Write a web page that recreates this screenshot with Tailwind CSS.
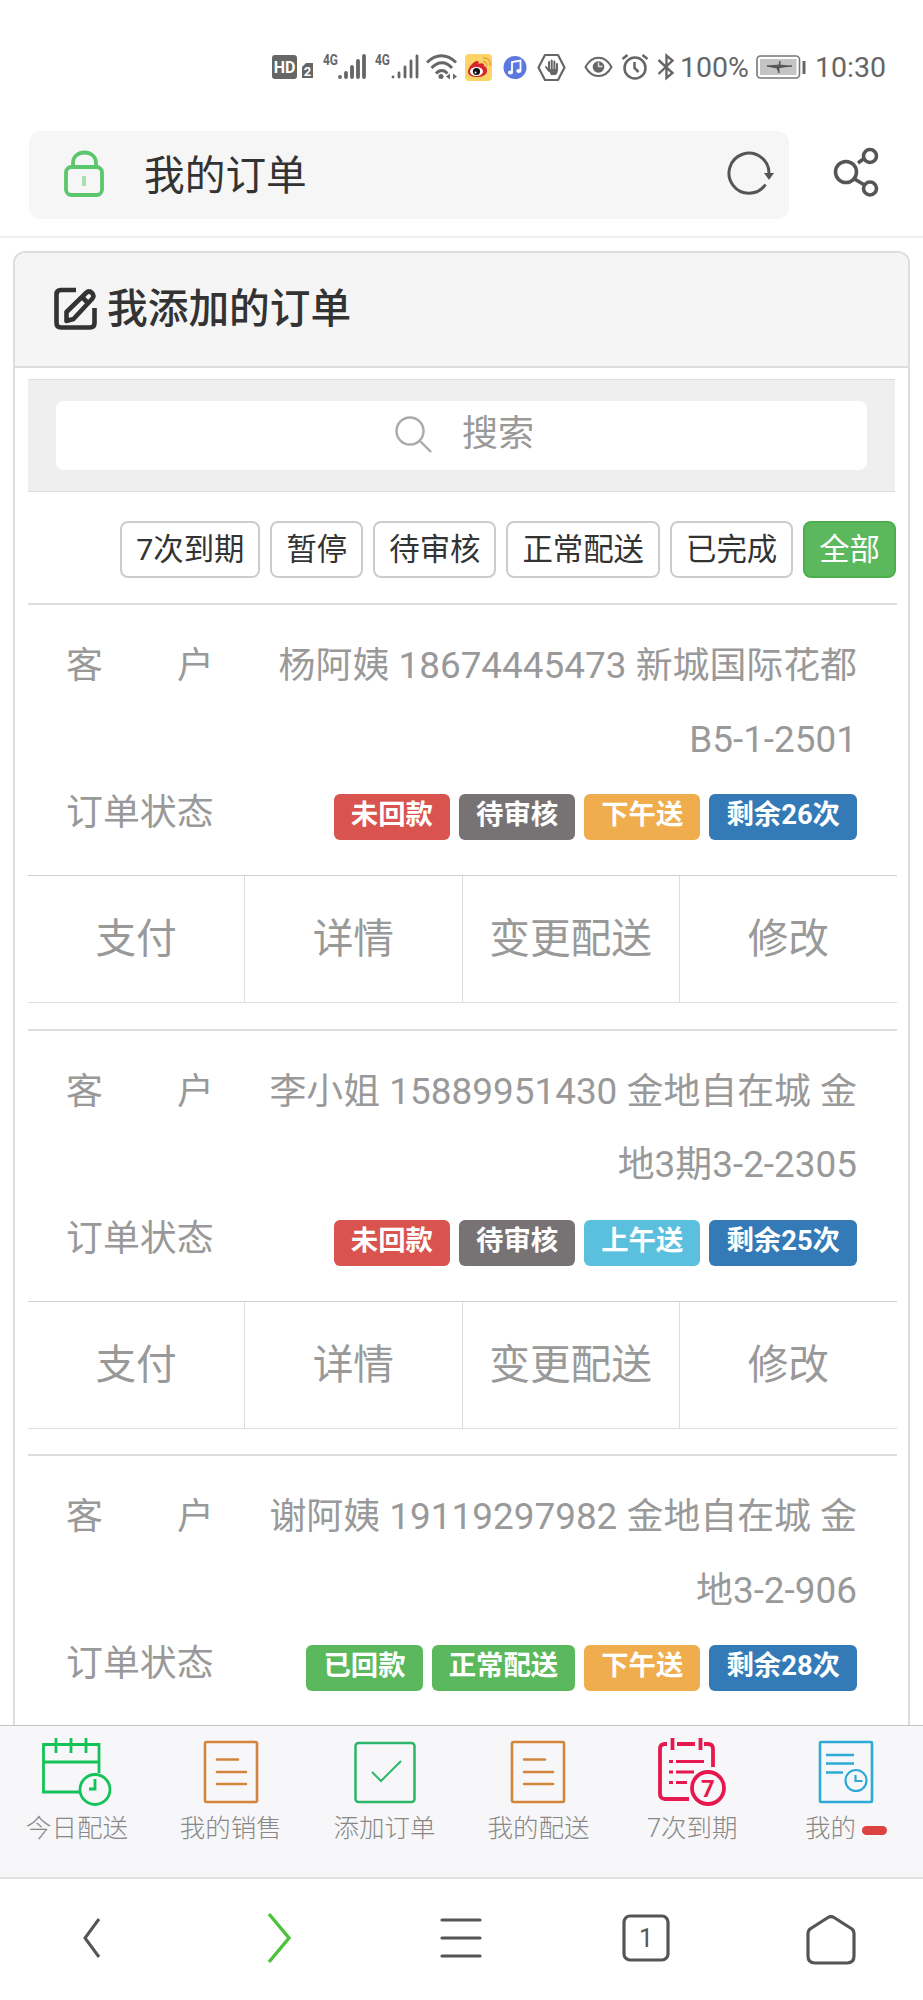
<!DOCTYPE html>
<html lang="zh-CN">
<head>
    <meta charset="UTF-8">
    <meta name="viewport" content="width=device-width, initial-scale=1.0">
    <title>我的订单</title>
    <!-- Tailwind CSS CDN -->
    <script src="https://cdn.jsdelivr.net/npm/@tailwindcss/browser@4"></script>
</head>
<body class="bg-white font-['Roboto','Noto_Sans_CJK_SC',sans-serif] text-[#333]">
<div class="w-[923px] h-[2000px] flex flex-col overflow-hidden">

    <!-- Status bar -->
    <div class="h-[131px] shrink-0 flex items-start pt-[50px] pl-[272px] text-[#666]">
        <svg class="w-[41px] h-[34px] shrink-0" viewBox="0 0 41 34" fill="#666">
            <rect x="0" y="5" width="25" height="24" rx="3"/>
            <text x="12.5" y="23" font-size="16" font-weight="700" fill="#fff" text-anchor="middle">HD</text>
            <path d="M34 13h7v15H30V17z"/>
            <text x="35.5" y="26" font-size="13" font-weight="700" fill="#fff" text-anchor="middle">2</text>
        </svg>
        <svg class="w-[44px] h-[34px] shrink-0 ml-[10px]" viewBox="0 0 44 34" fill="none" stroke="#666" stroke-width="3.8" stroke-linecap="round">
            <text x="0" y="15" font-size="15" font-weight="700" fill="#666" stroke="none" textLength="15" lengthAdjust="spacingAndGlyphs">4G</text>
            <path d="M17 27v0M23 27v-4M29 27v-10M35 27V11M41 27V6"/>
        </svg>
        <svg class="w-[44px] h-[34px] shrink-0 ml-[8px]" viewBox="0 0 44 34" fill="none" stroke="#666" stroke-width="2.8" stroke-linecap="round">
            <text x="0" y="15" font-size="15" font-weight="700" fill="#666" stroke="none" textLength="15" lengthAdjust="spacingAndGlyphs">4G</text>
            <path d="M18 27v0M24 27v-4M30 27v-10M36 27V11M42 27V6"/>
        </svg>
        <svg class="w-[32px] h-[34px] shrink-0 ml-[7px]" viewBox="0 0 32 34" fill="none" stroke="#666" stroke-width="2.8">
            <path d="M1 12.5C10 3.500 21 3.500 30 12.500M5.500 18C12 11 20 11 26 18M10 23.500c3.500-4 8-4 11.500 0"/>
            <circle cx="15" cy="26.500" r="2.500" fill="#666" stroke="none"/>
            <path d="M24 23.500v6l-4-3zM27 23.500v6l4-3z" fill="#666" stroke="none"/>
        </svg>
        <svg class="w-[27px] h-[34px] shrink-0 ml-[7px]" viewBox="0 0 27 34">
            <rect x="0" y="4" width="27" height="27" rx="4" fill="#fcd467"/>
            <path d="M3 22c0-5 6-11 9-11 2 0 2 2 1.500 3 3-1.500 6-1 5.500 2 3 1 3 3 3 5 0 4-5 6-10 6s-9-2-9-5z" fill="#d8262c"/>
            <ellipse cx="11.500" cy="21.500" rx="6.500" ry="4.500" fill="#fff"/>
            <circle cx="11.500" cy="21.500" r="3.600" fill="#111"/>
            <circle cx="10.500" cy="22.500" r="1" fill="#fff"/>
            <path d="M18 12c3-.5 4 1.500 3.500 4M18 8c6-.5 8 4 7 8" fill="none" stroke="#eda13c" stroke-width="1.600"/>
        </svg>
        <svg class="w-[24px] h-[34px] shrink-0 ml-[11px]" viewBox="0 0 24 34">
            <circle cx="12" cy="17.500" r="11.500" fill="#5b79de"/>
            <path d="M9 22.500V12l8.500-1.500V21" fill="none" stroke="#fff" stroke-width="1.800"/>
            <ellipse cx="7.500" cy="22.500" rx="2.500" ry="2" fill="#fff"/>
            <ellipse cx="15.800" cy="21" rx="2.500" ry="2" fill="#fff"/>
        </svg>
        <svg class="w-[29px] h-[34px] shrink-0 ml-[10px]" viewBox="0 0 29 34" fill="none" stroke="#666" stroke-width="2.200" stroke-linejoin="round">
            <path d="M8 5h13l6.500 12.500L21 30H8L1.500 17.500z"/>
            <path d="M9 17l3 4M12 12v8M14.700 10.500V20M17.400 11.500V20M20 14v6" stroke-width="2" stroke-linecap="round"/>
            <path d="M11 19h10c0 4-1.500 6-3 6h-4z" fill="#666" stroke="none"/>
        </svg>
        <svg class="w-[29px] h-[34px] shrink-0 ml-[18px]" viewBox="0 0 29 34" fill="none" stroke="#666" stroke-width="2">
            <path d="M1.500 17C8 4.500 21 4.500 27.500 17 21 29 8 29 1.500 17z"/>
            <circle cx="14.500" cy="17" r="5.800" fill="#666" stroke="none"/>
            <path d="M14.500 12.500v4h4" stroke="#ddd" stroke-width="1.500"/>
        </svg>
        <svg class="w-[28px] h-[34px] shrink-0 ml-[8px]" viewBox="0 0 28 34" fill="none" stroke="#666" stroke-width="2.500">
            <circle cx="14" cy="18" r="10.500"/>
            <path d="M13.500 12v6l4 4M1.500 9l5-4M21.500 5l5 4"/>
        </svg>
        <svg class="w-[19px] h-[34px] shrink-0 ml-[8px]" viewBox="0 0 19 34" fill="none" stroke="#666" stroke-width="2.400">
            <path d="M1.500 10l14 13-6 5V5.500l6 5-14 13.500"/>
        </svg>
        <span class="w-[76px] ml-[4px] text-[28.500px] leading-[36px]">100%</span>
        <svg class="w-[52px] h-[34px] shrink-0" viewBox="0 0 52 34">
            <rect x="1" y="6" width="42.500" height="22" rx="3.500" fill="#fff" stroke="#777" stroke-width="1.600"/>
            <rect x="4" y="9" width="36.500" height="16" fill="#c4c4c4"/>
            <path d="M11 16l13-1V11l-1 4 10 1h3l-13 1.500V23l-2-5z" fill="#555" stroke="#555"/>
            <path d="M48 11v13" stroke="#666" stroke-width="3"/>
        </svg>
        <span class="ml-[7px] text-[28.500px] leading-[36px]">10:30</span>
    </div>

    <!-- Browser address bar -->
    <div class="h-[107px] shrink-0 flex items-start border-b-2 border-[#eee] pl-[29px]">
        <div class="w-[760px] h-[88px] rounded-xl bg-[#f6f6f6] flex items-center">
            <svg class="w-[42px] h-[50px] ml-[34px] -mt-[5px]" viewBox="0 0 42 50" fill="none" stroke="#5cc66c" stroke-width="3.800">
                <rect x="3" y="19" width="36" height="28" rx="5.500"/>
                <path d="M10 19v-4c0-14 23-14 23 0v4"/>
                <path d="M21 28v10" stroke="#a5dfae"/>
            </svg>
            <span class="ml-[39px] mt-[2px] text-[40.700px] leading-none">我的订单</span>
            <svg class="w-[48px] h-[44px] ml-auto mr-[14px] -mt-[4px]" viewBox="0 0 48 44" fill="none" stroke="#555" stroke-width="3">
                <path d="M42 22A20 20 0 1 0 38.500 33.500"/>
                <path d="M37 22h10l-5 7z" fill="#555" stroke="none"/>
            </svg>
        </div>
        <svg class="w-[46px] h-[50px] ml-[44px] mt-[16px]" viewBox="0 0 46 50" fill="none" stroke="#555" stroke-width="3.600">
            <circle cx="13" cy="25" r="10.500"/>
            <circle cx="37" cy="9" r="6.500"/>
            <circle cx="37" cy="41.500" r="6.500"/>
            <path d="M25 16l6-4.500M21.500 32l10 6"/>
        </svg>
    </div>

    <!-- Orders panel -->
    <main class="flex-1 min-h-0 overflow-hidden pt-[13px] pl-[13px] pr-[13px]">
        <div class="h-[1600px] border-2 border-[#ddd] rounded-t-xl">
            <div class="h-[115px] flex items-center pl-[39px] bg-[#f5f5f5] border-b-2 border-[#ddd] rounded-t-[10px]">
                <svg class="w-[44px] h-[44px] -mt-[2px]" viewBox="0 0 44 44" fill="none" stroke="#333" stroke-width="4.600" stroke-linejoin="round">
                    <path d="M22 3H7Q2.500 3 2.500 7.500V36q0 4.500 4.500 4.500h29q4.500 0 4.500-4.500V21"/>
                    <path d="M12.500 25L32 6q3-3 6 0t0 6L19.500 32l-7 2z"/>
                    <path d="M28 10l6 6"/>
                </svg>
                <span class="ml-[9px] text-[40.700px] leading-none font-medium">我添加的订单</span>
            </div>

            <div class="mt-[11px] mx-[13px] h-[113px] bg-[#efefef] border-y border-[#ddd] px-[28px] pt-[21px]">
                <div class="h-[69px] bg-white rounded-lg flex items-center justify-center pl-[6px] text-[#999]">
                    <svg class="w-[37px] h-[37px] -mt-[3px]" viewBox="0 0 37 37" fill="none" stroke="#aaa" stroke-width="2.400">
                        <circle cx="15" cy="15" r="13.500"/>
                        <path d="M24.500 24.500L36 36"/>
                    </svg>
                    <span class="ml-[30px] -mt-[4px] text-[36px] leading-none">搜索</span>
                </div>
            </div>

            <div id="filters" class="mt-[29px] ml-[13px] mr-[12px] flex justify-end gap-[10px] text-[30.400px]">
                <button class="h-[57px] px-[14px] border-2 border-[#ccc] rounded-lg leading-[51px]">7次到期</button>
                <button class="h-[57px] px-[14px] border-2 border-[#ccc] rounded-lg leading-[51px]">暂停</button>
                <button class="h-[57px] px-[14px] border-2 border-[#ccc] rounded-lg leading-[51px]">待审核</button>
                <button class="h-[57px] px-[14px] border-2 border-[#ccc] rounded-lg leading-[51px]">正常配送</button>
                <button class="h-[57px] px-[14px] border-2 border-[#ccc] rounded-lg leading-[51px]">已完成</button>
                <button class="h-[57px] px-[14px] border-2 border-[#4cae4c] bg-[#5cb85c] text-white rounded-lg leading-[51px]">全部</button>
            </div>

            <div id="orders" class="mt-[25px] ml-[13px] mr-[11px]"></div>
        </div>
    </main>

    <!-- Tab bar -->
    <nav class="h-[152px] shrink-0 grid grid-cols-6 border-t border-[#c4c4c8] bg-[#f7f7f9] text-[25.500px] text-[#888] font-light">
        <a class="flex flex-col items-center pt-[11px]">
            <svg class="w-[70px] h-[72px]" viewBox="0 0 70 72" fill="none" stroke="#14c25a" stroke-width="2.800">
                <path d="M38 55H1.500V7.500H57V36M1.500 25H57M14 1v15M29 1v15M44 1v15"/>
                <circle cx="53" cy="52.500" r="15"/>
                <path d="M53 42v10h-6"/>
            </svg>
            <span class="leading-[39px]">今日配送</span>
        </a>
        <a class="flex flex-col items-center pt-[11px]">
            <svg class="w-[56px] h-[72px]" viewBox="0 0 56 72" fill="none" stroke="#d2853b" stroke-width="2.600">
                <rect x="2" y="5" width="52" height="60" rx="1.500"/>
                <path d="M14 22.500h21M14 35h29M14 47h29" stroke-linecap="round"/>
            </svg>
            <span class="leading-[39px]">我的销售</span>
        </a>
        <a class="flex flex-col items-center pt-[11px]">
            <svg class="w-[62px] h-[72px]" viewBox="0 0 62 72" fill="none" stroke="#2db669" stroke-width="2.500">
                <rect x="1.500" y="6" width="59" height="59" rx="3"/>
                <path d="M18 35l9 9 20-20" stroke-width="2"/>
            </svg>
            <span class="leading-[39px]">添加订单</span>
        </a>
        <a class="flex flex-col items-center pt-[11px]">
            <svg class="w-[56px] h-[72px]" viewBox="0 0 56 72" fill="none" stroke="#d2853b" stroke-width="2.600">
                <rect x="2" y="5" width="52" height="60" rx="1.500"/>
                <path d="M14 22.500h21M14 35h29M14 47h29" stroke-linecap="round"/>
            </svg>
            <span class="leading-[39px]">我的配送</span>
        </a>
        <a class="flex flex-col items-center pt-[11px]">
            <svg class="w-[70px] h-[72px]" viewBox="0 0 70 72" fill="none" stroke="#e6194f" stroke-width="3.800">
                <path d="M32 62H8q-5 0-5-5V12q0-5 5-5h2M20 7h18M47 7h4q5 0 5 5v18M15.500 1v12M43.500 1v12"/>
                <path d="M12 24.500h4M19 24.500h28M12 35h4M19 35h18M12 45.500h4M19 45.500h11" stroke-width="3"/>
                <circle cx="51" cy="51" r="16"/>
                <text x="51" y="59.500" font-size="24" font-weight="700" fill="#e6194f" stroke="none" text-anchor="middle">7</text>
            </svg>
            <span class="leading-[39px]">7次到期</span>
        </a>
        <a class="flex flex-col items-center pt-[11px]">
            <svg class="w-[56px] h-[72px]" viewBox="0 0 56 72" fill="none" stroke="#2fa9d6" stroke-width="2.600">
                <rect x="2" y="5" width="52" height="60" rx="1"/>
                <path d="M8 18h28M8 26.500h28M8 35.500h17"/>
                <circle cx="38" cy="43.500" r="10.500" stroke-width="2.200"/>
                <path d="M37.500 38v6h7" stroke-width="2.200"/>
            </svg>
            <span class="flex items-center leading-[39px]">我的<i class="ml-[6px] mt-[3px] w-[25px] h-[9px] rounded-full bg-[#dc4242]"></i></span>
        </a>
    </nav>

    <!-- Browser toolbar -->
    <footer class="h-[123px] shrink-0 grid grid-cols-5 items-center justify-items-center border-t-2 border-[#e2e2e2] pb-[3px]">
        <svg class="w-[20px] h-[42px]" viewBox="0 0 20 42" fill="none" stroke="#555" stroke-width="3"><path d="M17 2L3 21l14 19"/></svg>
        <svg class="w-[26px] h-[52px] ml-[4px]" viewBox="0 0 26 52" fill="none" stroke="#4cc23c" stroke-width="3.400"><path d="M3 2l20 24L3 50"/></svg>
        <svg class="w-[42px] h-[42px]" viewBox="0 0 42 42" stroke="#555" stroke-width="3.200" stroke-linecap="round"><path d="M2 3h38M2 21h38M2 39h38"/></svg>
        <svg class="w-[48px] h-[48px]" viewBox="0 0 48 48" fill="none" stroke="#555" stroke-width="3.200">
            <rect x="2" y="2" width="44" height="44" rx="6"/>
            <text x="24" y="33" font-size="25" fill="#555" stroke="none" text-anchor="middle">1</text>
        </svg>
        <svg class="w-[50px] h-[50px] mt-[4px]" viewBox="0 0 50 50" fill="none" stroke="#555" stroke-width="3.200" stroke-linejoin="round">
            <path d="M2 18v23q0 7 7 7h32q7 0 7-7V18q0-2-2-4L28 2.500q-3-2-6 0L4 14q-2 2-2 4z"/>
        </svg>
    </footer>
</div>

<script>
    // Badge colors
    const colors = {
        red: 'bg-[#d9534f]',
        gray: 'bg-[#777273]',
        orange: 'bg-[#f0ad4e]',
        cyan: 'bg-[#5bc0de]',
        blue: 'bg-[#337ab7]',
        green: 'bg-[#5cb85c]'
    };

    const orders = [
        {
            customer: '杨阿姨 18674445473 新城国际花都<br>B5-1-2501',
            badges: [['red', '未回款'], ['gray', '待审核'], ['orange', '下午送'], ['blue', '剩余26次']],
            actions: ['支付', '详情', '变更配送', '修改']
        },
        {
            customer: '李小姐 15889951430 金地自在城 金<br>地3期3-2-2305',
            badges: [['red', '未回款'], ['gray', '待审核'], ['cyan', '上午送'], ['blue', '剩余25次']],
            actions: ['支付', '详情', '变更配送', '修改']
        },
        {
            customer: '谢阿姨 19119297982 金地自在城 金<br>地3-2-906',
            badges: [['green', '已回款'], ['green', '正常配送'], ['orange', '下午送'], ['blue', '剩余28次']],
            actions: []
        }
    ];

    // Render order cards
    document.getElementById('orders').innerHTML = orders.map(order => `
        <section class="h-[400px] mb-[25.500px] border-t-2 border-b border-[#ddd] text-[#999]">
            <div class="h-[270px] pt-[24px] pl-[38px] pr-[40px] text-[36.900px] leading-[73.500px]">
                <div class="flex justify-between">
                    <span class="w-[148px] h-[147px] flex justify-between"><i class="not-italic">客</i><i class="not-italic">户</i></span>
                    <p class="text-right whitespace-nowrap">${order.customer}</p>
                </div>
                <div class="flex justify-between">
                    <span>订单状态</span>
                    <div class="flex gap-[9px] pt-[18px] text-[27.400px] leading-[43px] font-bold text-white">
                        ${order.badges.map(b => `<span class="h-[46px] px-[17px] rounded-md ${colors[b[0]]}">${b[1]}</span>`).join('')}
                    </div>
                </div>
            </div>
            <div class="h-[127px] grid grid-cols-4 divide-x divide-[#ddd] border-t border-[#d0d0d0] text-center text-[40.700px] leading-[127px]">
                ${order.actions.map(a => `<a>${a}</a>`).join('')}
            </div>
        </section>
    `).join('');
</script>

</body>
</html>
